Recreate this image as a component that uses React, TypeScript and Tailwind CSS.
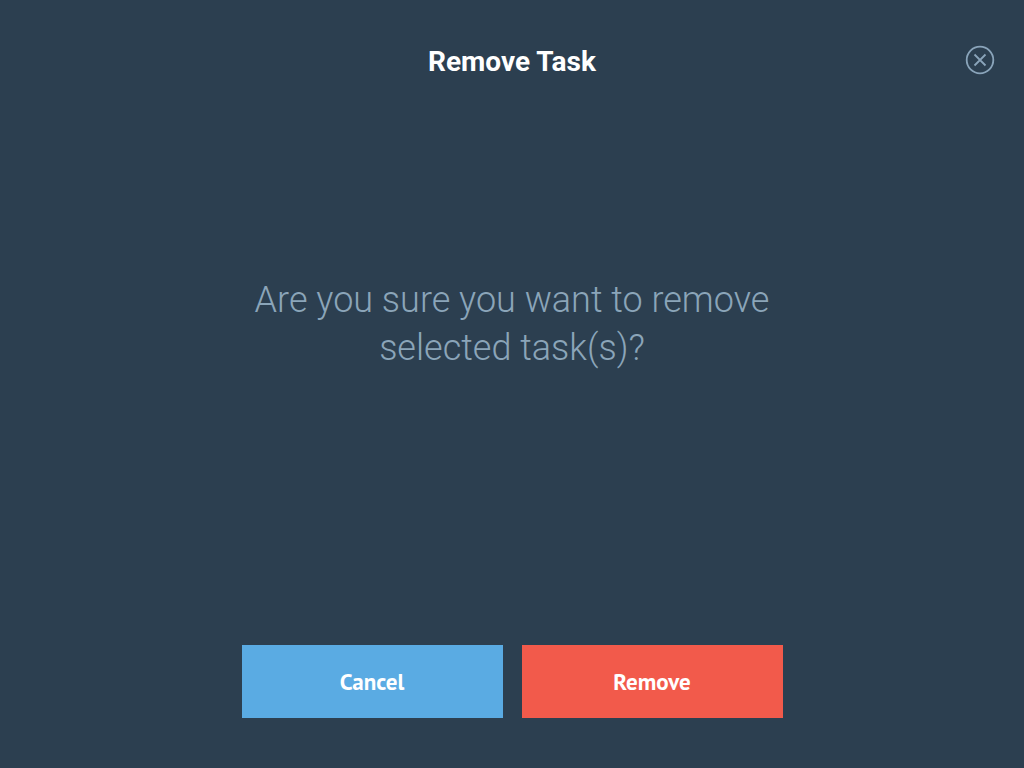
export default function App() {
  return (
    <main className="flex min-h-screen flex-col bg-[#2c3f50] font-['Roboto',sans-serif]">
      <header className="grid grid-cols-[1fr_auto_1fr] items-start px-7 pt-11">
        <h1 className="col-start-2 text-[28px] leading-9 font-bold text-white">Remove Task</h1>
        <button type="button" aria-label="Close" className="justify-self-end text-[#8aa4ba]">
          <svg viewBox="0 0 32 32" className="size-8" fill="none" stroke="currentColor" strokeWidth="1.8">
            <circle cx="16" cy="16" r="13.3" />
            <path d="M10.5 10.5 21.5 21.5M21.5 10.5 10.5 21.5" />
          </svg>
        </button>
      </header>
      <p className="mx-auto mt-49 max-w-[560px] text-center text-4xl leading-12 font-light text-[#8ba5b9]">
        Are you sure you want to remove selected task(s)?
      </p>
      <footer className="mt-auto flex justify-center gap-[19px] px-6 pb-[50px] font-['PT_Sans','Open_Sans',sans-serif] text-[23px] font-bold text-white">
        <button type="button" className="h-[73px] w-[261px] bg-[#5aabe3] pt-0.5">Cancel</button>
        <button type="button" className="h-[73px] w-[261px] bg-[#f25a4b] pt-0.5">Remove</button>
      </footer>
    </main>
  );
}
